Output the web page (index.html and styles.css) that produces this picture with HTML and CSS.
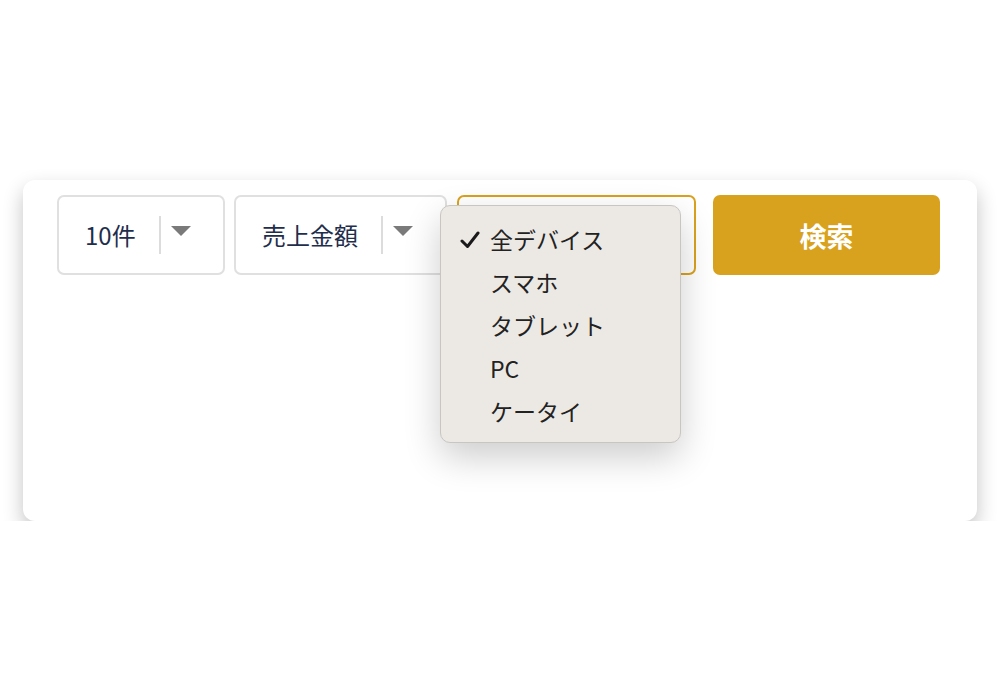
FILE: index.html
```html
<!DOCTYPE html>
<html lang="ja">
<head>
<meta charset="utf-8">
<title>検索フォーム</title>
<link rel="stylesheet" href="styles.css">
</head>
<body>
<div class="page">
  <div class="card">
    <div class="toolbar">
      <div class="select select-count">
        <span class="select-label">10件</span>
        <span class="select-divider"></span>
        <span class="select-arrow"></span>
      </div>
      <div class="select select-sort">
        <span class="select-label">売上金額</span>
        <span class="select-divider"></span>
        <span class="select-arrow"></span>
      </div>
      <div class="select select-open">
        <span class="select-spacer"></span>
        <span class="select-divider"></span>
        <span class="select-arrow"></span>
        <ul class="menu">
          <li class="menu-item is-checked">
            <svg class="check" viewBox="0 0 20 18" width="20" height="18"><path d="M2 10 L7.5 15.5 L18 2" fill="none" stroke="#1a1a1a" stroke-width="3" stroke-linecap="round" stroke-linejoin="round"/></svg>
            <span>全デバイス</span>
          </li>
          <li class="menu-item"><span>スマホ</span></li>
          <li class="menu-item"><span>タブレット</span></li>
          <li class="menu-item"><span>PC</span></li>
          <li class="menu-item"><span>ケータイ</span></li>
        </ul>
      </div>
      <button class="search-btn">検索</button>
    </div>
  </div>
</div>
</body>
</html>
```

FILE: styles.css
```css
* { box-sizing: border-box; }
html, body { margin: 0; padding: 0; background: #ffffff; }
body { font-family: "Noto Sans CJK JP", "Noto Sans", sans-serif; }

.page {
  padding: 180px 23px 0 23px;
}

.card {
  background: #ffffff;
  border-radius: 12px;
  height: 341px;
  box-shadow: 0 9px 20px rgba(0, 0, 0, 0.24);
  padding: 15px 36px 0 34px;
}

.toolbar {
  display: flex;
  align-items: stretch;
  height: 80px;
}

.select {
  position: relative;
  display: flex;
  align-items: center;
  height: 80px;
  border: 2px solid #e0e0e0;
  border-radius: 7px;
  padding: 0 32px 0 26px;
  background: #fff;
  margin-right: 9px;
}
.select-count { width: 168px; }
.select-sort { width: 213px; margin-right: 10px; }

.select-label {
  font-size: 24px;
  color: #1f2e4c;
  line-height: 1;
  white-space: nowrap;
}

.select-spacer { flex: 1; }

.select-divider {
  width: 2px;
  height: 38px;
  background: #dcdcdc;
  margin-left: 23px;
  margin-right: 10px;
}

.select-arrow {
  width: 0;
  height: 0;
  border-left: 10px solid transparent;
  border-right: 10px solid transparent;
  border-top: 10px solid #7a7a7a;
  margin-top: -8px;
}

.select-open {
  width: 239px;
  border-color: #d9a21e;
  margin-right: 17px;
}

.menu {
  position: absolute;
  left: -19px;
  top: 8px;
  width: 241px;
  height: 238px;
  margin: 0;
  padding: 12px 0 11px 0;
  list-style: none;
  background: #ece9e5;
  border: 1px solid #c9c6c2;
  border-radius: 10px;
  box-shadow: 0 14px 36px rgba(0, 0, 0, 0.2);
  z-index: 10;
}

.menu-item {
  position: relative;
  height: 43px;
  display: flex;
  align-items: center;
  padding-left: 49px;
  font-size: 23px;
  color: #222222;
  line-height: 1;
}

.check {
  position: absolute;
  left: 19px;
  top: 13px;
}

.search-btn {
  width: 227px;
  height: 80px;
  border: none;
  border-radius: 7px;
  background: #d9a21e;
  color: #ffffff;
  font-family: "Noto Sans CJK JP", sans-serif;
  font-weight: 700;
  font-size: 27px;
  padding: 0;
  cursor: pointer;
}
```
